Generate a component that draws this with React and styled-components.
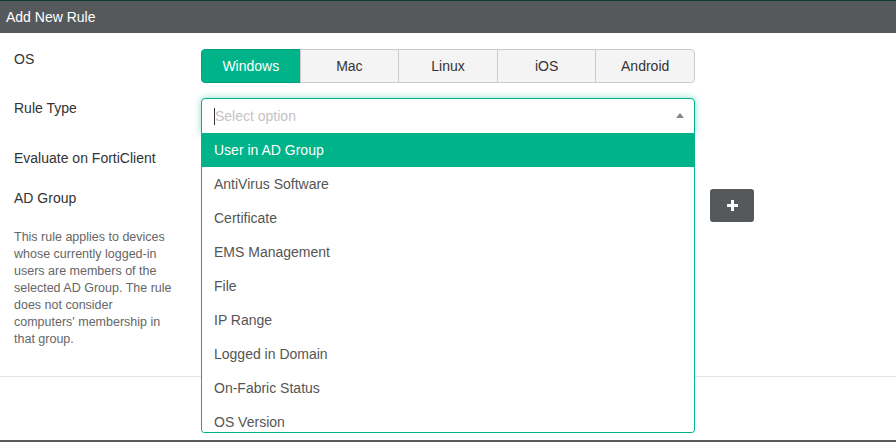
import styled, { createGlobalStyle } from "styled-components";

const GlobalStyle = createGlobalStyle`
  html, body {
    margin: 0;
    padding: 0;
    background: #fff;
  }
  * { box-sizing: border-box; }
`;

const GREEN = "#00b389";

const Modal = styled.div`
  width: 896px;
  height: 442px;
  display: flex;
  flex-direction: column;
  border-top: 1px solid #0d3b32;
  border-bottom: 2px solid #5a5a5a;
  font-family: "Liberation Sans", Arial, sans-serif;
  color: #333;
  overflow: hidden;
`;

const Header = styled.div`
  height: 32px;
  flex: none;
  background: #55595c;
  color: #fff;
  font-size: 14px;
  display: flex;
  align-items: center;
  padding-left: 6px;
`;

const Body = styled.div`
  flex: 1;
  padding-top: 16px;
  display: flex;
  flex-direction: column;
  gap: 15px;
`;

const Row = styled.div`
  display: grid;
  grid-template-columns: 201px 494px auto;
  align-items: start;
`;

const LabelCol = styled.div`
  padding: 0 14px;
  margin-top: ${(p) => p.$shift || 0}px;
`;

const Label = styled.div`
  font-size: 14px;
  line-height: 20px;
  color: #333;
`;

const Help = styled.div`
  margin-top: 21px;
  width: 161px;
  font-size: 12.5px;
  line-height: 17px;
  color: #666;
`;

const Segmented = styled.div`
  display: flex;
  height: 34px;
`;

const Segment = styled.div`
  flex: 1;
  display: flex;
  align-items: center;
  justify-content: center;
  font-size: 14px;
  background: ${(p) => (p.$active ? GREEN : "#f4f4f4")};
  color: ${(p) => (p.$active ? "#fff" : "#333")};
  border: 1px solid ${(p) => (p.$active ? "#00a07c" : "#ccc")};
  margin-left: -1px;
  &:first-child {
    margin-left: 0;
    border-radius: 4px 0 0 4px;
  }
  &:last-child {
    border-radius: 0 4px 4px 0;
  }
`;

const SelectWrap = styled.div`
  position: relative;
`;

const SelectBox = styled.div`
  height: 36px;
  border: 1px solid ${GREEN};
  border-radius: 4px 4px 0 0;
  box-shadow: 0 0 7px rgba(0, 179, 137, 0.45);
  display: flex;
  align-items: center;
  padding: 0 10px 0 12px;
  background: #fff;
`;

const Caret = styled.span`
  width: 1px;
  height: 17px;
  background: #333;
`;

const Placeholder = styled.span`
  flex: 1;
  font-size: 14px;
  color: #c4c4c4;
`;

const Arrow = styled.span`
  width: 0;
  height: 0;
  border-left: 4px solid transparent;
  border-right: 4px solid transparent;
  border-bottom: 5px solid #888;
  margin-bottom: 2px;
`;

const Menu = styled.div`
  position: absolute;
  top: calc(100% - 1px);
  left: 0;
  width: 100%;
  height: 300px;
  overflow: hidden;
  background: #fff;
  border: 1px solid ${GREEN};
  border-top: none;
  border-radius: 0 0 4px 4px;
  z-index: 5;
`;

const Option = styled.div`
  height: 34px;
  display: flex;
  align-items: center;
  font-size: 14px;
  color: ${(p) => (p.$active ? "#fff" : "#555")};
  background: ${(p) => (p.$active ? GREEN : "#fff")};
  margin: ${(p) => (p.$active ? "0 -1px" : "0")};
  padding-left: ${(p) => (p.$active ? 13 : 12)}px;
`;

const Toggle = styled.div`
  height: 25px;
`;

const PlainSelect = styled.div`
  height: 33px;
  border: 1px solid #ccc;
  border-radius: 4px;
`;

const AddButton = styled.div`
  margin-left: 15px;
  width: 44px;
  height: 33px;
  border-radius: 3px;
  background: #55595c;
  display: flex;
  align-items: center;
  justify-content: center;
`;

const Footer = styled.div`
  height: 64px;
  flex: none;
  border-top: 1px solid #e5e5e5;
`;

const options = [
  "User in AD Group",
  "AntiVirus Software",
  "Certificate",
  "EMS Management",
  "File",
  "IP Range",
  "Logged in Domain",
  "On-Fabric Status",
  "OS Version",
];

const osList = ["Windows", "Mac", "Linux", "iOS", "Android"];

export default function App() {
  return (
    <>
      <GlobalStyle />
      <Modal>
        <Header>Add New Rule</Header>
        <Body>
          <Row>
            <LabelCol>
              <Label>OS</Label>
            </LabelCol>
            <Segmented>
              {osList.map((os, i) => (
                <Segment key={os} $active={i === 0}>
                  {os}
                </Segment>
              ))}
            </Segmented>
          </Row>
          <Row>
            <LabelCol>
              <Label>Rule Type</Label>
            </LabelCol>
            <SelectWrap>
              <SelectBox>
                <Caret />
                <Placeholder>Select option</Placeholder>
                <Arrow />
              </SelectBox>
              <Menu>
                {options.map((o, i) => (
                  <Option key={o} $active={i === 0}>
                    {o}
                  </Option>
                ))}
              </Menu>
            </SelectWrap>
          </Row>
          <Row>
            <LabelCol $shift={-1}>
              <Label>Evaluate on FortiClient</Label>
            </LabelCol>
            <Toggle />
          </Row>
          <Row>
            <LabelCol $shift={-1}>
              <Label>AD Group</Label>
              <Help>
                This rule applies to devices whose currently logged-in users
                are members of the selected AD Group. The rule does not
                consider computers' membership in that group.
              </Help>
            </LabelCol>
            <PlainSelect />
            <AddButton>
              <svg width="11" height="11" viewBox="0 0 11 11">
                <rect x="4" y="0" width="3" height="11" fill="#fff" />
                <rect x="0" y="4" width="11" height="3" fill="#fff" />
              </svg>
            </AddButton>
          </Row>
        </Body>
        <Footer />
      </Modal>
    </>
  );
}
